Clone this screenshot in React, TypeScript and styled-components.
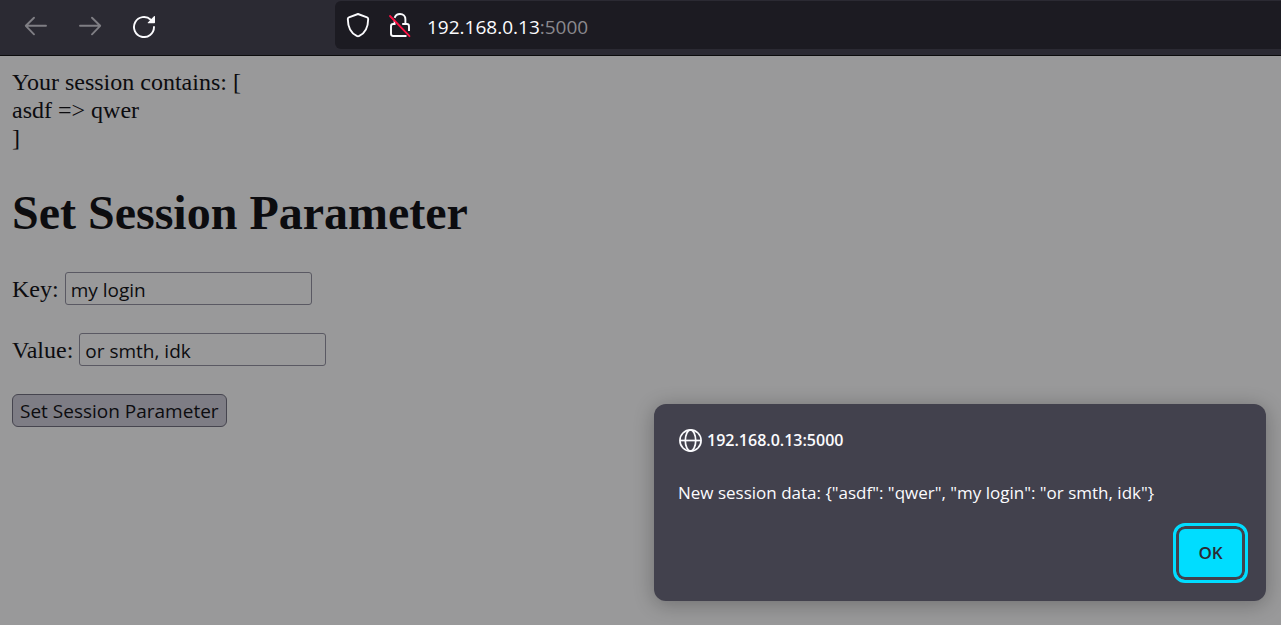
import React, { useState } from "react";
import styled, { createGlobalStyle } from "styled-components";

const GlobalStyle = createGlobalStyle`
  *, *::before, *::after { box-sizing: border-box; }
  body { margin: 0; background: #99999a; }
  button, input { font: inherit; color: inherit; }
`;

const uiFont = `"Open Sans", "Noto Sans", sans-serif`;

const Browser = styled.div`
  position: relative;
  display: flex;
  flex-direction: column;
  min-height: 100vh;
  background: #99999a;
`;

const Toolbar = styled.header`
  display: flex;
  align-items: center;
  height: 56px;
  padding: 0 0 4px 18px;
  background: #2b2a33;
  border-bottom: 1px solid #0c0c0d;
`;

const NavButtons = styled.nav`
  display: flex;
  gap: 18px;
  flex: 0 0 317px;
`;

const NavButton = styled.button`
  display: grid;
  place-items: center;
  width: 36px;
  height: 36px;
  padding: 0;
  border: 0;
  background: none;
  color: #fbfbfe;

  &:disabled { color: #7f7e84; }
`;

const AddressBar = styled.div`
  display: flex;
  align-items: center;
  flex: 1;
  height: 48px;
  padding-left: 10px;
  border-radius: 6px 0 0 6px;
  background: #1c1b22;
  color: #fbfbfe;
  margin-top: -1px;
`;

const SiteIcon = styled.button`
  display: grid;
  place-items: center;
  width: 26px;
  height: 30px;
  margin-right: 16px;
  padding: 0;
  border: 0;
  background: none;
`;

const Url = styled.span`
  margin-left: -2px;
  padding-top: 3px;
  font: 19px/28px ${uiFont};
`;

const Port = styled.span`
  color: #8a898e;
`;

const Content = styled.main`
  padding: 12px;
  color: #0c0c0f;
  font: 24px/28px "Liberation Serif", serif;
`;

const Heading = styled.h1`
  margin: 33px 0 31px;
  font-size: 48px;
  line-height: 56px;
`;

const Form = styled.form`
  display: flex;
  flex-direction: column;
  align-items: flex-start;
  gap: 28px;
`;

const Field = styled.div`
  display: flex;
  align-items: center;
  gap: 6px;
`;

const TextInput = styled.input`
  width: 247px;
  height: 33px;
  padding: 2px 5px 0;
  border: 1px solid #5a5963;
  border-radius: 3px;
  background: #99999a;
  font: 19px/28px ${uiFont};
`;

const SubmitButton = styled.button`
  height: 33px;
  padding: 1px 7px 0;
  border: 1px solid #46454f;
  border-radius: 6px;
  background: #7e7d85;
  font: 19px/28px ${uiFont};
`;

const Dialog = styled.section`
  position: absolute;
  right: 15px;
  bottom: 24px;
  display: flex;
  flex-direction: column;
  width: 612px;
  max-width: calc(100% - 30px);
  padding: 24px 18px 18px 24px;
  border-radius: 12px;
  background: #42414d;
  color: #fbfbfe;
  box-shadow: 0 3px 20px rgba(12, 12, 13, 0.3);
  font: 17px/24px ${uiFont};
`;

const DialogTitle = styled.h2`
  display: flex;
  align-items: center;
  gap: 4px;
  margin: 0 0 28px;
  font-size: 16px;
  line-height: 25px;
  font-weight: 600;
`;

const Message = styled.p`
  margin: 0 0 18px;
`;

const OkButton = styled.button`
  align-self: flex-end;
  width: 75px;
  height: 60px;
  padding: 0;
  border: 3px solid #00ddff;
  border-radius: 12px;
  background: #00ddff;
  box-shadow: inset 0 0 0 3px #42414d;
  color: #2b2a33;
  font-size: 17px;
  font-weight: 600;
`;

const Arrow = ({ forward = false }: { forward?: boolean }) => (
  <svg width="24" height="24" viewBox="0 0 24 24" fill="none" stroke="currentColor" strokeWidth="1.9" strokeLinecap="round" strokeLinejoin="round" aria-hidden="true">
    <path d={forward ? "M2 11.8H22M14 3.7L22.2 11.8L14 20.3" : "M22 11.8H2M10 3.7L1.8 11.8L10 20.3"} />
  </svg>
);

const Reload = () => (
  <svg width="24" height="24" viewBox="0 0 24 24" fill="none" aria-hidden="true">
    <path d="M22 13A10 10 0 1 1 18.8 5.7" stroke="currentColor" strokeWidth="1.9" strokeLinecap="round" />
    <path d="M22.2 2.1Q23 1.6 23 2.7V8.5Q23 9.2 22.3 9.2H16.2Q15.1 9.2 15.9 8.4Z" fill="currentColor" />
  </svg>
);

const Shield = () => (
  <svg width="24" height="26" viewBox="0 0 24 26" fill="none" stroke="currentColor" strokeWidth="1.9" strokeLinejoin="round" aria-hidden="true">
    <path d="M12 2L21.1 5.3Q22.2 5.7 22.2 6.9C22.1 15 19.3 20.9 13.3 23.9Q12 24.5 10.7 23.9C4.7 20.9 1.9 15 1.8 6.9Q1.8 5.7 2.9 5.3Z" />
  </svg>
);

const InsecureLock = () => (
  <svg width="24" height="26" viewBox="0 0 24 26" fill="none" strokeWidth="1.9" aria-hidden="true">
    <path d="M6.6 5.8C7.5 3.4 9.5 2 12 2C15.2 2 17.4 4.3 17.4 7.3V12M14.2 12H18.8Q21 12 21 14.2V19M6.6 9V12H5.2Q3 12 3 14.2V21.8Q3 24 5.2 24H18.5" stroke="currentColor" />
    <path d="M2 4L21.5 24.2" stroke="#ff0f43" strokeWidth="1.8" strokeLinecap="round" />
  </svg>
);

const Globe = () => (
  <svg width="25" height="25" viewBox="0 0 25 25" fill="none" stroke="currentColor" strokeWidth="1.7" aria-hidden="true">
    <circle cx="12.5" cy="12.5" r="10.6" />
    <ellipse cx="12.5" cy="12.5" rx="5.2" ry="10.6" />
    <path d="M2 12.5H23" />
  </svg>
);

export default function App() {
  const [key, setKey] = useState("my login");
  const [value, setValue] = useState("or smth, idk");

  return (
    <>
      <GlobalStyle />
      <Browser>
        <Toolbar>
          <NavButtons>
            <NavButton disabled aria-label="Back"><Arrow /></NavButton>
            <NavButton disabled aria-label="Forward"><Arrow forward /></NavButton>
            <NavButton aria-label="Reload"><Reload /></NavButton>
          </NavButtons>
          <AddressBar>
            <SiteIcon aria-label="Tracking protection"><Shield /></SiteIcon>
            <SiteIcon aria-label="Connection is not secure"><InsecureLock /></SiteIcon>
            <Url>192.168.0.13<Port>:5000</Port></Url>
          </AddressBar>
        </Toolbar>
        <Content>
          <div>Your session contains: [</div>
          <div>asdf =&gt; qwer</div>
          <div>]</div>
          <Heading>Set Session Parameter</Heading>
          <Form onSubmit={(e) => e.preventDefault()}>
            <Field>
              <label htmlFor="key">Key:</label>
              <TextInput id="key" value={key} onChange={(e) => setKey(e.target.value)} />
            </Field>
            <Field>
              <label htmlFor="value">Value:</label>
              <TextInput id="value" value={value} onChange={(e) => setValue(e.target.value)} />
            </Field>
            <SubmitButton type="submit">Set Session Parameter</SubmitButton>
          </Form>
        </Content>
        <Dialog role="alertdialog" aria-labelledby="dialog-title" aria-describedby="dialog-message">
          <DialogTitle id="dialog-title"><Globe />192.168.0.13:5000</DialogTitle>
          <Message id="dialog-message">{'New session data: {"asdf": "qwer", "my login": "or smth, idk"}'}</Message>
          <OkButton type="button">OK</OkButton>
        </Dialog>
      </Browser>
    </>
  );
}
